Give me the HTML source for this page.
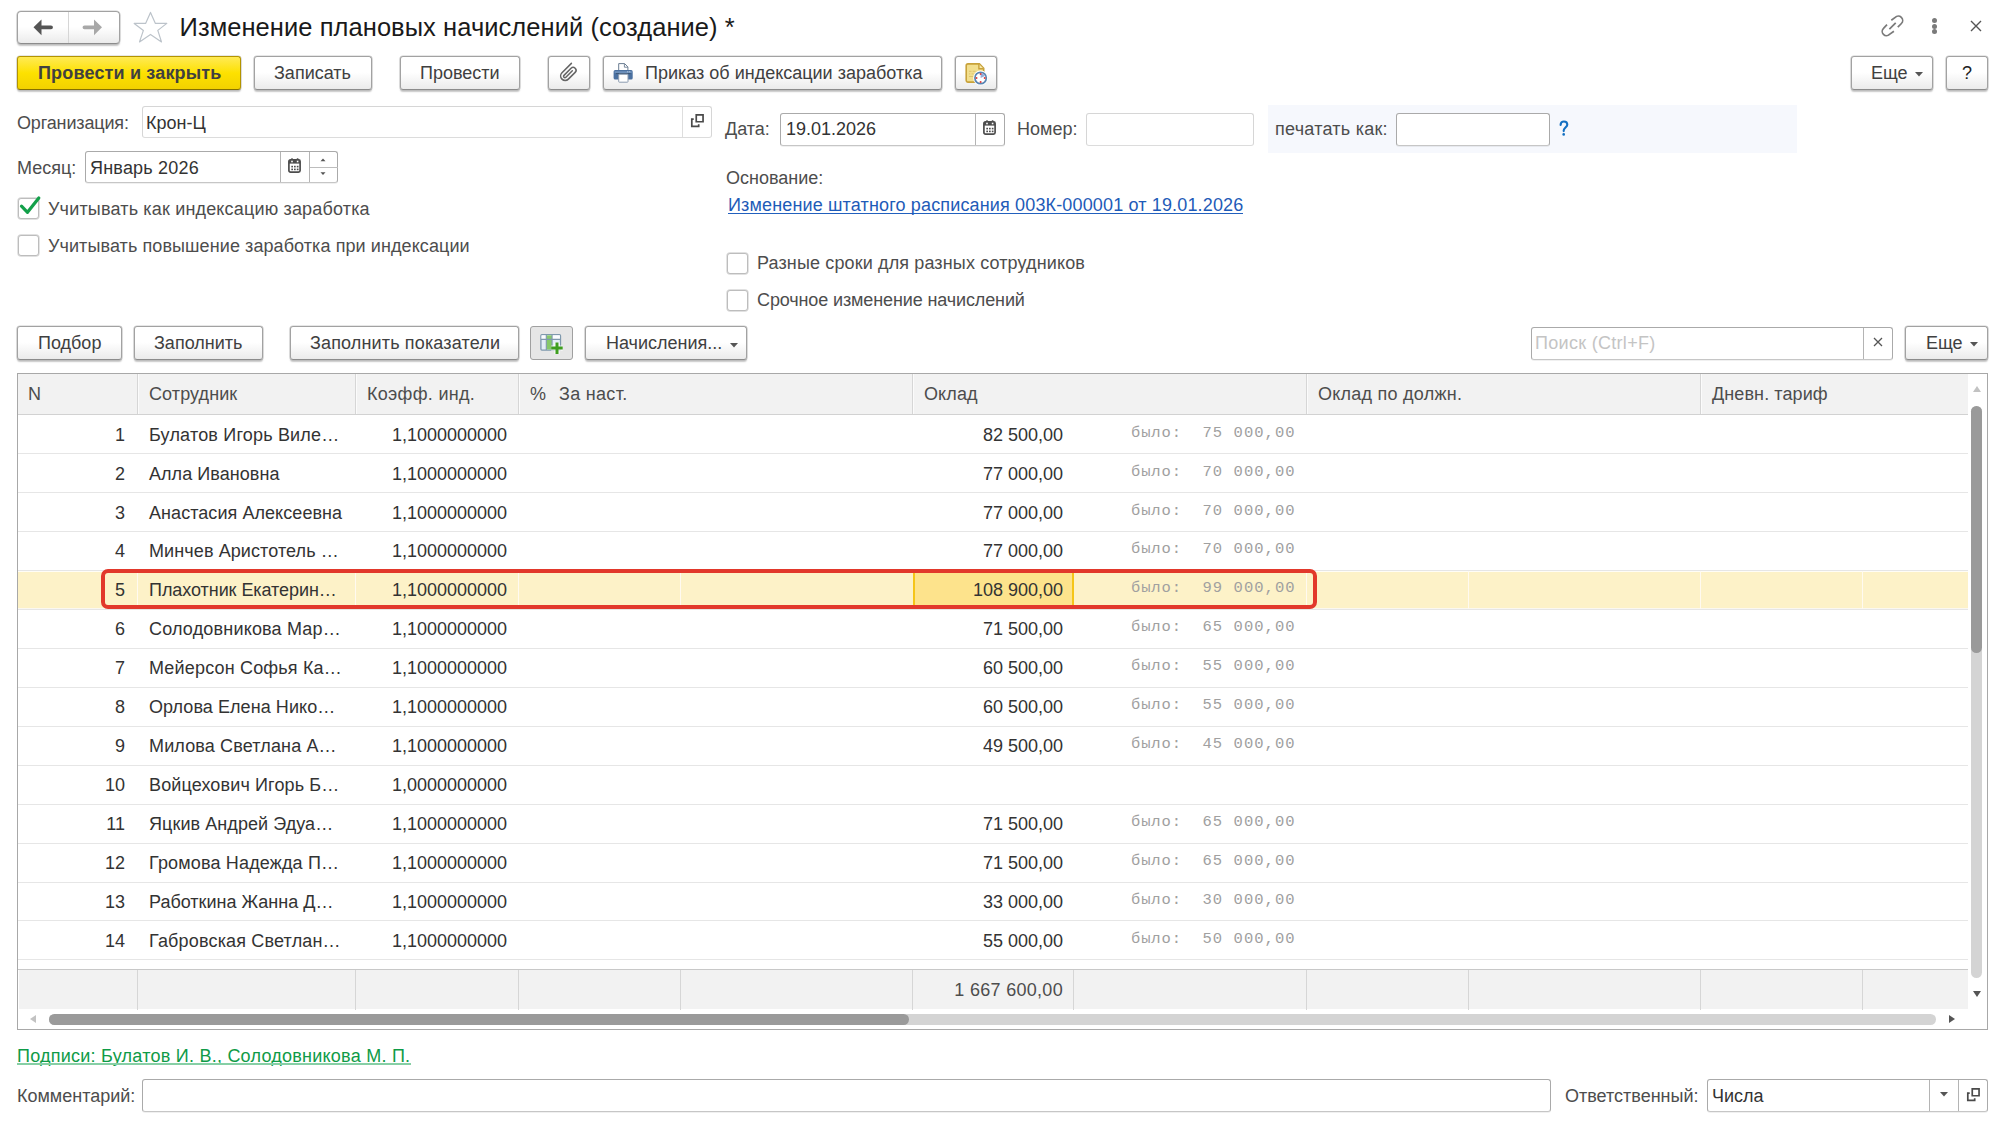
<!DOCTYPE html>
<html lang="ru"><head><meta charset="utf-8"><title>Изменение плановых начислений</title><style>
*{margin:0;padding:0;box-sizing:border-box}
html,body{width:2000px;height:1121px;overflow:hidden;background:#fff}
body{position:relative;font-family:"Liberation Sans",sans-serif;font-size:18px;color:#4d4d4d}
.a{position:absolute}
.t{position:absolute;line-height:20px;white-space:nowrap}
.btn{position:absolute;height:34px;border:1px solid #a2a2a2;border-bottom-color:#8c8c8c;border-radius:3px;
 background:linear-gradient(#ffffff 0%,#ffffff 48%,#ebebeb 100%);box-shadow:0 0 0 0.6px rgba(150,150,150,.45),0 1.5px 1.5px rgba(0,0,0,.22);
 color:#404040;line-height:20px;white-space:nowrap}
.btn .lbl{position:absolute;top:6px}
.fld{position:absolute;border:1px solid #aaaaaa;border-bottom-color:#c6c6c6;border-radius:3px;background:#fff;box-shadow:0 1px 0 rgba(0,0,0,.06)}
.fld.lt{border-color:#d6d6d6;border-bottom-color:#dcdcdc;box-shadow:none}
.vd{position:absolute;top:0;bottom:0;width:1px;background:#b4b4b4}
.cb{position:absolute;width:21px;height:21px;border:1px solid #bdbdbd;border-radius:3px;background:#fff;box-shadow:0 0 0 0.7px rgba(190,190,190,.6)}
.lnk{position:absolute;line-height:20px;white-space:nowrap;color:#1e5bb8}
.hd{position:absolute;top:374px;height:40px;background:#f2f2f2}
.row{position:absolute;left:18px;width:1950px;height:39px;border-bottom:1px solid #ebebeb}
.c{position:absolute;line-height:20px;white-space:nowrap;color:#333}
.r{text-align:right}
.was{position:absolute;font-family:"Liberation Mono",monospace;font-size:15.5px;letter-spacing:0.86px;line-height:19px;color:#a0a0a0;white-space:pre}
</style></head><body>
<div class="btn" style="left:17px;top:11px;width:103px;height:33px;border-radius:4px"></div>
<div class="a" style="left:68px;top:12px;width:1px;height:31px;background:#d6d6d6"></div>
<svg class="a" style="left:30px;top:16px" width="26" height="22" viewBox="0 0 26 22"><path d="M3.5 11.3 L11.5 3.4 V9.4 H21 A1.95 1.95 0 0 1 21 13.3 H11.5 V19.2 Z" fill="#555"/></svg>
<svg class="a" style="left:80px;top:16px" width="26" height="22" viewBox="0 0 26 22"><path d="M22 11.3 L14 3.4 V9.4 H4.5 A1.95 1.95 0 0 0 4.5 13.3 H14 V19.2 Z" fill="#a8a8a8"/></svg>
<svg class="a" style="left:130px;top:8px" width="42" height="38" viewBox="0 0 42 38"><path d="M20.5 4.4 L25.4 15.4 L36.8 15.4 L27.8 22.4 L31.5 33.9 L20.5 26.4 L9.5 33.9 L13.4 22.4 L4.2 15.4 L15.6 15.4 Z" fill="none" stroke="#bcc3ca" stroke-width="1.2" stroke-linejoin="round"/></svg>
<div class="t" style="left:179.5px;top:13px;font-size:25.5px;line-height:28px;color:#1a1a1a;letter-spacing:0.06px">Изменение плановых начислений (создание) *</div>
<svg class="a" style="left:1880px;top:14px" width="25" height="24" viewBox="0 0 25 24"><g fill="none" stroke="#7a7a7a" stroke-width="1.7"><path d="M11.3 6.3 L15.2 3.4 A4.2 4.2 0 0 1 21.4 9.5 L17.8 13.2"/><path d="M7.0 10.6 L3.5 14.3 A4.2 4.2 0 0 0 9.5 20.4 L13.9 17.2"/><path d="M9.4 15.1 L15.7 8.8"/></g></svg>
<div class="a" style="left:1932px;top:18px;width:5px;height:5px;border-radius:50%;background:#7a7a7a"></div>
<div class="a" style="left:1932px;top:23.5px;width:5px;height:5px;border-radius:50%;background:#7a7a7a"></div>
<div class="a" style="left:1932px;top:29px;width:5px;height:5px;border-radius:50%;background:#7a7a7a"></div>
<svg class="a" style="left:1970px;top:20px" width="12" height="12" viewBox="0 0 12 12"><path d="M1 1 L11 11 M11 1 L1 11" stroke="#555" stroke-width="1.4"/></svg>
<div class="btn" style="left:17px;top:56px;width:224px;border-color:#b39400;border-bottom-color:#857000;background:linear-gradient(#ffea55,#fde100 50%,#f2d200);font-weight:bold;color:#404040"><span class="lbl" style="left:20px;letter-spacing:0.17px">Провести и закрыть</span></div>
<div class="btn" style="left:254px;top:56px;width:118px"><span class="lbl" style="left:19px">Записать</span></div>
<div class="btn" style="left:400px;top:56px;width:120px"><span class="lbl" style="left:19px">Провести</span></div>
<div class="btn" style="left:548px;top:56px;width:42px"></div>
<svg class="a" style="left:555px;top:59px" width="28" height="28" viewBox="0 0 28 28"><g transform="translate(13.5 13.5) rotate(45)"><path d="M-4.4 -8.5 V4.8 A4.5 4.5 0 0 0 4.6 4.8 V-4.8 A2.9 2.9 0 0 0 -1.2 -4.8 V5.2 A1.35 1.35 0 0 0 1.5 5.2 V-3.9" fill="none" stroke="#666" stroke-width="1.55" stroke-linecap="round"/></g></svg>
<div class="btn" style="left:603px;top:56px;width:339px"><span class="lbl" style="left:41px">Приказ об индексации заработка</span></div>
<svg class="a" style="left:610px;top:59px" width="28" height="28" viewBox="0 0 28 28"><path d="M8.7 4.6 H14.6 L17.9 7.9 V12 H8.7 Z" fill="#fff" stroke="#6b7d92" stroke-width="1"/><path d="M14.4 4.8 V8.2 H17.8" fill="none" stroke="#6b7d92" stroke-width="0.9"/><rect x="3.6" y="11.1" width="19.1" height="9.4" rx="1.6" fill="#4a70a0"/><rect x="4.6" y="12.2" width="17.2" height="1.8" fill="#6d90bb"/><rect x="6" y="14" width="14.5" height="1.1" fill="#3a5677"/><rect x="17.2" y="12.3" width="1" height="1" fill="#c5d4e6"/><rect x="19.2" y="12.3" width="1" height="1" fill="#c5d4e6"/><rect x="8.7" y="15.2" width="9.3" height="8" rx="0.6" fill="#fff" stroke="#8a9aae" stroke-width="1"/></svg>
<div class="btn" style="left:955px;top:56px;width:42px"></div>
<svg class="a" style="left:962px;top:59px" width="28" height="28" viewBox="0 0 28 28"><path d="M6 4.9 H17.4 L21.7 9.3 V23.1 H6 A1.8 1.8 0 0 1 4.2 21.3 V6.7 A1.8 1.8 0 0 1 6 4.9 Z" fill="#f2df8e" stroke="#c8a23a" stroke-width="1.6"/><path d="M16.9 5 V9.7 H21.6" fill="#f6e8ad" stroke="#c8a23a" stroke-width="1.4"/><g fill="#dcc36e"><rect x="7" y="11.8" width="2.5" height="1"/><rect x="10.6" y="11.8" width="3" height="1"/><rect x="7" y="14.4" width="1.2" height="1"/><rect x="9.6" y="14.4" width="2" height="1"/><rect x="7" y="17" width="4" height="1"/></g><circle cx="18.6" cy="19" r="7.4" fill="#fff"/><circle cx="18.6" cy="19" r="5.7" fill="#fff" stroke="#5a85b2" stroke-width="1.7"/><path d="M18.6 19 V14.1 A4.9 4.9 0 0 1 23 16.9 Z" fill="#93acd8"/><g fill="#e03a3a"><circle cx="18.6" cy="14.9" r="1"/><circle cx="22.7" cy="19" r="1"/><circle cx="18.6" cy="23.1" r="1"/><circle cx="14.5" cy="19" r="1"/></g></svg>
<div class="btn" style="left:1851px;top:56px;width:82px"><span class="lbl" style="left:19px">Еще</span><svg class="a" style="left:63px;top:15px" width="8" height="5"><path d="M0 0 H8 L4 4.5 Z" fill="#555"/></svg></div>
<div class="btn" style="left:1946px;top:56px;width:42px"><span class="lbl" style="left:15px;color:#222">?</span></div>
<div class="t" style="left:17px;top:113px;letter-spacing:-0.15px">Организация:</div>
<div class="fld lt" style="left:142px;top:106px;width:570px;height:32px"><div class="vd" style="left:539px;background:#dedede"></div></div>
<div class="t" style="left:146px;top:113px;color:#333">Крон-Ц</div>
<svg class="a" style="left:690px;top:114px" width="14" height="14" viewBox="0 0 14 14"><path d="M6.25 0.95 H13.05 V7.75 H6.25 Z M3.7 5.1 H1.8 V12.4 H8.7 V10.3" fill="none" stroke="#4a4a4a" stroke-width="1.7"/></svg>
<div class="t" style="left:17px;top:158px">Месяц:</div>
<div class="fld" style="left:85px;top:151px;width:253px;height:32px"><div class="vd" style="left:194px"></div><div class="vd" style="left:223px"></div><div class="a" style="left:224px;top:15px;width:28px;height:1px;background:#bdbdbd"></div></div>
<div class="t" style="left:90px;top:158px;color:#333;letter-spacing:0.2px">Январь 2026</div>
<svg class="a" style="left:288px;top:158px" width="13" height="16" viewBox="0 0 13 16"><rect x="0.9" y="1.9" width="11.2" height="12.3" rx="1.6" fill="#fff" stroke="#4d4d4d" stroke-width="1.7"/><rect x="0.9" y="1.9" width="11.2" height="3.7" fill="#4d4d4d"/><rect x="3.1" y="0.2" width="1.8" height="2.4" rx="0.6" fill="#4d4d4d"/><rect x="8.7" y="0.2" width="1.8" height="2.4" rx="0.6" fill="#4d4d4d"/><rect x="3.2" y="2.7" width="1.6" height="1.6" fill="#fff"/><rect x="8.8" y="2.7" width="1.6" height="1.6" fill="#fff"/><g fill="#4d4d4d"><rect x="3.3" y="7.8" width="1.7" height="1.6"/><rect x="6" y="7.8" width="1.7" height="1.6"/><rect x="8.8" y="7.8" width="1.7" height="1.6"/><rect x="3.3" y="10.6" width="1.7" height="1.6"/><rect x="6" y="10.6" width="1.7" height="1.6"/><rect x="8.8" y="10.6" width="1.7" height="1.6"/></g></svg>
<svg class="a" style="left:320px;top:158px" width="6" height="4"><path d="M0.5 3.2 H5.5 L3 0.5 Z" fill="#555"/></svg>
<svg class="a" style="left:320px;top:172px" width="6" height="4"><path d="M0.5 0.3 H5.5 L3 3 Z" fill="#555"/></svg>
<div class="t" style="left:725px;top:119px">Дата:</div>
<div class="fld" style="left:780px;top:113px;width:225px;height:33px"><div class="vd" style="left:194px"></div></div>
<div class="t" style="left:786px;top:119px;color:#333">19.01.2026</div>
<svg class="a" style="left:983px;top:120px" width="13" height="16" viewBox="0 0 13 16"><rect x="0.9" y="1.9" width="11.2" height="12.3" rx="1.6" fill="#fff" stroke="#4d4d4d" stroke-width="1.7"/><rect x="0.9" y="1.9" width="11.2" height="3.7" fill="#4d4d4d"/><rect x="3.1" y="0.2" width="1.8" height="2.4" rx="0.6" fill="#4d4d4d"/><rect x="8.7" y="0.2" width="1.8" height="2.4" rx="0.6" fill="#4d4d4d"/><rect x="3.2" y="2.7" width="1.6" height="1.6" fill="#fff"/><rect x="8.8" y="2.7" width="1.6" height="1.6" fill="#fff"/><g fill="#4d4d4d"><rect x="3.3" y="7.8" width="1.7" height="1.6"/><rect x="6" y="7.8" width="1.7" height="1.6"/><rect x="8.8" y="7.8" width="1.7" height="1.6"/><rect x="3.3" y="10.6" width="1.7" height="1.6"/><rect x="6" y="10.6" width="1.7" height="1.6"/><rect x="8.8" y="10.6" width="1.7" height="1.6"/></g></svg>
<div class="t" style="left:1017px;top:119px">Номер:</div>
<div class="fld lt" style="left:1086px;top:113px;width:168px;height:33px"></div>
<div class="a" style="left:1268px;top:105px;width:529px;height:48px;background:#f6f8fd"></div>
<div class="t" style="left:1275px;top:119px;letter-spacing:0.25px">печатать как:</div>
<div class="fld" style="left:1396px;top:113px;width:154px;height:33px"></div>
<svg class="a" style="left:1550px;top:112px" width="28" height="30" viewBox="0 0 28 30"><path d="M10.6 13 C10.6 10.6 12.1 9.5 13.9 9.5 C15.8 9.5 17.3 10.8 17.3 12.7 C17.3 15 13.7 16.1 13.7 18.4 V19.1" fill="none" stroke="#1470c2" stroke-width="2.1" stroke-linecap="round"/><circle cx="13.7" cy="22.4" r="1.3" fill="#1470c2"/></svg>
<div class="t" style="left:726px;top:168px">Основание:</div>
<div class="lnk" style="left:728px;top:195px;letter-spacing:0.15px">Изменение штатного расписания 003К-000001 от 19.01.2026</div><div class="a" style="left:728px;top:213px;width:515px;height:1px;background:#2260bd"></div>
<div class="cb" style="left:18px;top:198px"></div>
<svg class="a" style="left:18px;top:194px" width="24" height="22" viewBox="0 0 24 22"><path d="M3.5 12.2 L9.5 18.3 L20.8 4" fill="none" stroke="#13a04a" stroke-width="3.2" stroke-linecap="round" stroke-linejoin="round"/></svg>
<div class="t" style="left:48px;top:199px;letter-spacing:0.17px">Учитывать как индексацию заработка</div>
<div class="cb" style="left:18px;top:235px"></div>
<div class="t" style="left:48px;top:236px;letter-spacing:0.085px">Учитывать повышение заработка при индексации</div>
<div class="cb" style="left:727px;top:253px"></div>
<div class="t" style="left:757px;top:253px;letter-spacing:0.13px">Разные сроки для разных сотрудников</div>
<div class="cb" style="left:727px;top:290px"></div>
<div class="t" style="left:757px;top:290px;letter-spacing:-0.12px">Срочное изменение начислений</div>
<div class="btn" style="left:17px;top:326px;width:105px"><span class="lbl" style="left:20px">Подбор</span></div>
<div class="btn" style="left:134px;top:326px;width:129px"><span class="lbl" style="left:19px">Заполнить</span></div>
<div class="btn" style="left:290px;top:326px;width:229px"><span class="lbl" style="left:19px;letter-spacing:0.15px">Заполнить показатели</span></div>
<div class="btn" style="left:530px;top:326px;width:43px;background:#e6e6e6;box-shadow:none;border-color:#a0a0a0"></div>
<svg class="a" style="left:536px;top:329px" width="30" height="30" viewBox="0 0 30 30"><rect x="4.9" y="5.7" width="19.6" height="15.4" rx="1" fill="#e4eef7" stroke="#7f99ad" stroke-width="1.3"/><rect x="5.5" y="6.3" width="18.4" height="4" fill="#fbfdff"/><rect x="10.4" y="6.3" width="5.6" height="14.2" fill="#86c96a"/><path d="M5 10.4 H24.4 M10.3 6 V21 M16.1 6 V21" stroke="#7f99ad" stroke-width="1.1"/><path d="M21 13.6 V24.9 M15.2 19.1 H26.7" stroke="#fff" stroke-width="5.4" stroke-opacity="0.75"/><path d="M21 13.6 V24.9 M15.2 19.1 H26.7" stroke="#3f9e1f" stroke-width="3"/></svg>
<div class="btn" style="left:585px;top:326px;width:162px"><span class="lbl" style="left:20px">Начисления...</span><svg class="a" style="left:144px;top:16px" width="8" height="5"><path d="M0 0 H8 L4 4.5 Z" fill="#555"/></svg></div>
<div class="fld" style="left:1531px;top:327px;width:362px;height:33px"><div class="vd" style="left:331px"></div></div>
<div class="t" style="left:1535px;top:333px;color:#c4c4c4;letter-spacing:0.3px">Поиск (Ctrl+F)</div>
<svg class="a" style="left:1873px;top:337px" width="10" height="10" viewBox="0 0 10 10"><path d="M1 1 L9 9 M9 1 L1 9" stroke="#555" stroke-width="1.3"/></svg>
<div class="btn" style="left:1905px;top:326px;width:83px"><span class="lbl" style="left:20px">Еще</span><svg class="a" style="left:64px;top:15px" width="8" height="5"><path d="M0 0 H8 L4 4.5 Z" fill="#555"/></svg></div>
<div class="a" style="left:17px;top:373px;width:1971px;height:657px;border:1px solid #a8a8a8;background:#fff"></div>
<div class="hd" style="left:18px;width:1950px;border-bottom:1px solid #d2d2d2;height:41px"></div>
<div class="a" style="left:137px;top:374px;width:1px;height:40px;background:#d6d6d6"></div>
<div class="a" style="left:138px;top:374px;width:1px;height:40px;background:#fbfbfb"></div>
<div class="a" style="left:355px;top:374px;width:1px;height:40px;background:#d6d6d6"></div>
<div class="a" style="left:356px;top:374px;width:1px;height:40px;background:#fbfbfb"></div>
<div class="a" style="left:518px;top:374px;width:1px;height:40px;background:#d6d6d6"></div>
<div class="a" style="left:519px;top:374px;width:1px;height:40px;background:#fbfbfb"></div>
<div class="a" style="left:912px;top:374px;width:1px;height:40px;background:#d6d6d6"></div>
<div class="a" style="left:913px;top:374px;width:1px;height:40px;background:#fbfbfb"></div>
<div class="a" style="left:1306px;top:374px;width:1px;height:40px;background:#d6d6d6"></div>
<div class="a" style="left:1307px;top:374px;width:1px;height:40px;background:#fbfbfb"></div>
<div class="a" style="left:1700px;top:374px;width:1px;height:40px;background:#d6d6d6"></div>
<div class="a" style="left:1701px;top:374px;width:1px;height:40px;background:#fbfbfb"></div>
<div class="t" style="left:28px;top:384px;color:#4d4d4d;letter-spacing:0.00px">N</div>
<div class="t" style="left:149px;top:384px;color:#4d4d4d;letter-spacing:0.10px">Сотрудник</div>
<div class="t" style="left:367px;top:384px;color:#4d4d4d;letter-spacing:0.30px">Коэфф. инд.</div>
<div class="t" style="left:530px;top:384px;color:#4d4d4d;letter-spacing:0.00px">%</div>
<div class="t" style="left:559px;top:384px;color:#4d4d4d;letter-spacing:0.30px">За наст.</div>
<div class="t" style="left:924px;top:384px;color:#4d4d4d;letter-spacing:0.10px">Оклад</div>
<div class="t" style="left:1318px;top:384px;color:#4d4d4d;letter-spacing:0.25px">Оклад по должн.</div>
<div class="t" style="left:1712px;top:384px;color:#4d4d4d;letter-spacing:0.10px">Дневн. тариф</div>
<div class="a" style="left:18px;top:453px;width:1950px;height:1px;background:#e6e6e6"></div>
<div class="c r" style="left:18px;width:107px;top:425px">1</div>
<div class="c" style="left:149px;top:425px;letter-spacing:0.19px">Булатов Игорь Виле…</div>
<div class="c r" style="left:356px;width:151px;top:425px">1,1000000000</div>
<div class="c r" style="left:913px;width:150px;top:425px">82 500,00</div>
<div class="was" style="left:1131px;top:424px">было:</div>
<div class="was" style="left:1202.5px;top:424px;letter-spacing:1.05px">75 000,00</div>
<div class="a" style="left:18px;top:492px;width:1950px;height:1px;background:#e6e6e6"></div>
<div class="c r" style="left:18px;width:107px;top:464px">2</div>
<div class="c" style="left:149px;top:464px;letter-spacing:0.05px">Алла Ивановна</div>
<div class="c r" style="left:356px;width:151px;top:464px">1,1000000000</div>
<div class="c r" style="left:913px;width:150px;top:464px">77 000,00</div>
<div class="was" style="left:1131px;top:463px">было:</div>
<div class="was" style="left:1202.5px;top:463px;letter-spacing:1.05px">70 000,00</div>
<div class="a" style="left:18px;top:531px;width:1950px;height:1px;background:#e6e6e6"></div>
<div class="c r" style="left:18px;width:107px;top:503px">3</div>
<div class="c" style="left:149px;top:503px;letter-spacing:0.06px">Анастасия Алексеевна</div>
<div class="c r" style="left:356px;width:151px;top:503px">1,1000000000</div>
<div class="c r" style="left:913px;width:150px;top:503px">77 000,00</div>
<div class="was" style="left:1131px;top:502px">было:</div>
<div class="was" style="left:1202.5px;top:502px;letter-spacing:1.05px">70 000,00</div>
<div class="a" style="left:18px;top:570px;width:1950px;height:1px;background:#e6e6e6"></div>
<div class="c r" style="left:18px;width:107px;top:541px">4</div>
<div class="c" style="left:149px;top:541px;letter-spacing:0.10px">Минчев Аристотель …</div>
<div class="c r" style="left:356px;width:151px;top:541px">1,1000000000</div>
<div class="c r" style="left:913px;width:150px;top:541px">77 000,00</div>
<div class="was" style="left:1131px;top:540px">было:</div>
<div class="was" style="left:1202.5px;top:540px;letter-spacing:1.05px">70 000,00</div>
<div class="a" style="left:18px;top:571px;width:1950px;height:38px;background:#fdf2c8"></div>
<div class="a" style="left:18px;top:571px;width:1950px;height:1px;background:#fffdf6"></div>
<div class="a" style="left:18px;top:608px;width:1950px;height:1px;background:#fbf8f0"></div>
<div class="a" style="left:18px;top:609px;width:1950px;height:1px;background:#e6e6e6"></div>
<div class="a" style="left:137px;top:571px;width:1px;height:38px;background:#fffaf0"></div>
<div class="a" style="left:355px;top:571px;width:1px;height:38px;background:#fffaf0"></div>
<div class="a" style="left:518px;top:571px;width:1px;height:38px;background:#fffaf0"></div>
<div class="a" style="left:680px;top:571px;width:1px;height:38px;background:#fffaf0"></div>
<div class="a" style="left:1306px;top:571px;width:1px;height:38px;background:#fffaf0"></div>
<div class="a" style="left:1468px;top:571px;width:1px;height:38px;background:#fffaf0"></div>
<div class="a" style="left:1700px;top:571px;width:1px;height:38px;background:#fffaf0"></div>
<div class="a" style="left:1862px;top:571px;width:1px;height:38px;background:#fffaf0"></div>
<div class="a" style="left:913px;top:571px;width:161px;height:38px;background:#fde38c;border-left:2px solid #f5c518;border-right:2px solid #f5c518"></div>
<div class="c r" style="left:18px;width:107px;top:580px">5</div>
<div class="c" style="left:149px;top:580px;letter-spacing:-0.06px">Плахотник Екатерин…</div>
<div class="c r" style="left:356px;width:151px;top:580px">1,1000000000</div>
<div class="c r" style="left:913px;width:150px;top:580px">108 900,00</div>
<div class="was" style="left:1131px;top:579px">было:</div>
<div class="was" style="left:1202.5px;top:579px;letter-spacing:1.05px">99 000,00</div>
<div class="a" style="left:18px;top:648px;width:1950px;height:1px;background:#e6e6e6"></div>
<div class="c r" style="left:18px;width:107px;top:619px">6</div>
<div class="c" style="left:149px;top:619px;letter-spacing:0.18px">Солодовникова Мар…</div>
<div class="c r" style="left:356px;width:151px;top:619px">1,1000000000</div>
<div class="c r" style="left:913px;width:150px;top:619px">71 500,00</div>
<div class="was" style="left:1131px;top:618px">было:</div>
<div class="was" style="left:1202.5px;top:618px;letter-spacing:1.05px">65 000,00</div>
<div class="a" style="left:18px;top:687px;width:1950px;height:1px;background:#e6e6e6"></div>
<div class="c r" style="left:18px;width:107px;top:658px">7</div>
<div class="c" style="left:149px;top:658px;letter-spacing:0.17px">Мейерсон Софья Ка…</div>
<div class="c r" style="left:356px;width:151px;top:658px">1,1000000000</div>
<div class="c r" style="left:913px;width:150px;top:658px">60 500,00</div>
<div class="was" style="left:1131px;top:657px">было:</div>
<div class="was" style="left:1202.5px;top:657px;letter-spacing:1.05px">55 000,00</div>
<div class="a" style="left:18px;top:726px;width:1950px;height:1px;background:#e6e6e6"></div>
<div class="c r" style="left:18px;width:107px;top:697px">8</div>
<div class="c" style="left:149px;top:697px;letter-spacing:0.07px">Орлова Елена Нико…</div>
<div class="c r" style="left:356px;width:151px;top:697px">1,1000000000</div>
<div class="c r" style="left:913px;width:150px;top:697px">60 500,00</div>
<div class="was" style="left:1131px;top:696px">было:</div>
<div class="was" style="left:1202.5px;top:696px;letter-spacing:1.05px">55 000,00</div>
<div class="a" style="left:18px;top:765px;width:1950px;height:1px;background:#e6e6e6"></div>
<div class="c r" style="left:18px;width:107px;top:736px">9</div>
<div class="c" style="left:149px;top:736px;letter-spacing:0.14px">Милова Светлана А…</div>
<div class="c r" style="left:356px;width:151px;top:736px">1,1000000000</div>
<div class="c r" style="left:913px;width:150px;top:736px">49 500,00</div>
<div class="was" style="left:1131px;top:735px">было:</div>
<div class="was" style="left:1202.5px;top:735px;letter-spacing:1.05px">45 000,00</div>
<div class="a" style="left:18px;top:804px;width:1950px;height:1px;background:#e6e6e6"></div>
<div class="c r" style="left:18px;width:107px;top:775px">10</div>
<div class="c" style="left:149px;top:775px;letter-spacing:0.13px">Войцехович Игорь Б…</div>
<div class="c r" style="left:356px;width:151px;top:775px">1,0000000000</div>
<div class="a" style="left:18px;top:843px;width:1950px;height:1px;background:#e6e6e6"></div>
<div class="c r" style="left:18px;width:107px;top:814px">11</div>
<div class="c" style="left:149px;top:814px;letter-spacing:0.07px">Яцкив Андрей Эдуа…</div>
<div class="c r" style="left:356px;width:151px;top:814px">1,1000000000</div>
<div class="c r" style="left:913px;width:150px;top:814px">71 500,00</div>
<div class="was" style="left:1131px;top:813px">было:</div>
<div class="was" style="left:1202.5px;top:813px;letter-spacing:1.05px">65 000,00</div>
<div class="a" style="left:18px;top:882px;width:1950px;height:1px;background:#e6e6e6"></div>
<div class="c r" style="left:18px;width:107px;top:853px">12</div>
<div class="c" style="left:149px;top:853px;letter-spacing:0.16px">Громова Надежда П…</div>
<div class="c r" style="left:356px;width:151px;top:853px">1,1000000000</div>
<div class="c r" style="left:913px;width:150px;top:853px">71 500,00</div>
<div class="was" style="left:1131px;top:852px">было:</div>
<div class="was" style="left:1202.5px;top:852px;letter-spacing:1.05px">65 000,00</div>
<div class="a" style="left:18px;top:920px;width:1950px;height:1px;background:#e6e6e6"></div>
<div class="c r" style="left:18px;width:107px;top:892px">13</div>
<div class="c" style="left:149px;top:892px;letter-spacing:0.00px">Работкина Жанна Д…</div>
<div class="c r" style="left:356px;width:151px;top:892px">1,1000000000</div>
<div class="c r" style="left:913px;width:150px;top:892px">33 000,00</div>
<div class="was" style="left:1131px;top:891px">было:</div>
<div class="was" style="left:1202.5px;top:891px;letter-spacing:1.05px">30 000,00</div>
<div class="a" style="left:18px;top:959px;width:1950px;height:1px;background:#e6e6e6"></div>
<div class="c r" style="left:18px;width:107px;top:931px">14</div>
<div class="c" style="left:149px;top:931px;letter-spacing:0.17px">Габровская Светлан…</div>
<div class="c r" style="left:356px;width:151px;top:931px">1,1000000000</div>
<div class="c r" style="left:913px;width:150px;top:931px">55 000,00</div>
<div class="was" style="left:1131px;top:930px">было:</div>
<div class="was" style="left:1202.5px;top:930px;letter-spacing:1.05px">50 000,00</div>
<div class="a" style="left:18px;top:969px;width:1950px;height:1px;background:#c8c8c8"></div>
<div class="a" style="left:19px;top:970px;width:1949px;height:39px;background:#f2f2f2"></div>
<div class="a" style="left:137px;top:970px;width:1px;height:40px;background:#d6d6d6"></div>
<div class="a" style="left:355px;top:970px;width:1px;height:40px;background:#d6d6d6"></div>
<div class="a" style="left:518px;top:970px;width:1px;height:40px;background:#d6d6d6"></div>
<div class="a" style="left:680px;top:970px;width:1px;height:40px;background:#d6d6d6"></div>
<div class="a" style="left:912px;top:970px;width:1px;height:40px;background:#d6d6d6"></div>
<div class="a" style="left:1073px;top:970px;width:1px;height:40px;background:#d6d6d6"></div>
<div class="a" style="left:1306px;top:970px;width:1px;height:40px;background:#d6d6d6"></div>
<div class="a" style="left:1468px;top:970px;width:1px;height:40px;background:#d6d6d6"></div>
<div class="a" style="left:1700px;top:970px;width:1px;height:40px;background:#d6d6d6"></div>
<div class="a" style="left:1862px;top:970px;width:1px;height:40px;background:#d6d6d6"></div>
<div class="c r" style="left:913px;width:150px;top:980px;color:#4d4d4d;letter-spacing:0.3px">1 667 600,00</div>
<div class="a" style="left:1971px;top:406px;width:11px;height:572px;border-radius:6px;background:#d4d4d4"></div>
<div class="a" style="left:1971px;top:406px;width:11px;height:247px;border-radius:6px;background:#9a9a9a"></div>
<svg class="a" style="left:1973px;top:386px" width="8" height="6"><path d="M0 6 H8 L4 0 Z" fill="#c2c2c2"/></svg>
<svg class="a" style="left:1973px;top:991px" width="8" height="6"><path d="M0 0 H8 L4 6 Z" fill="#555"/></svg>
<div class="a" style="left:49px;top:1014px;width:1887px;height:11px;border-radius:6px;background:#d4d4d4"></div>
<div class="a" style="left:49px;top:1014px;width:860px;height:11px;border-radius:6px;background:#9a9a9a"></div>
<svg class="a" style="left:30px;top:1015px" width="6" height="8"><path d="M6 0 V8 L0 4 Z" fill="#c2c2c2"/></svg>
<svg class="a" style="left:1949px;top:1015px" width="6" height="8"><path d="M0 0 V8 L6 4 Z" fill="#555"/></svg>
<div class="a" style="left:101px;top:569px;width:1216px;height:39.5px;border:4px solid #e2382b;border-radius:7px"></div>
<div class="t" style="left:17px;top:1046px;color:#0f9b47;letter-spacing:0.24px">Подписи: Булатов И. В., Солодовникова М. П.</div>
<div class="a" style="left:17px;top:1063px;width:394px;height:2px;background:#86cfa5"></div>
<div class="t" style="left:17px;top:1086px">Комментарий:</div>
<div class="fld" style="left:142px;top:1079px;width:1409px;height:33px"></div>
<div class="t" style="left:1565px;top:1086px">Ответственный:</div>
<div class="fld" style="left:1707px;top:1079px;width:281px;height:33px"><div class="vd" style="left:221px"></div><div class="vd" style="left:250px"></div></div>
<div class="t" style="left:1712px;top:1086px;color:#333">Числа</div>
<svg class="a" style="left:1940px;top:1092px" width="8" height="5"><path d="M0 0 H8 L4 4.5 Z" fill="#555"/></svg>
<svg class="a" style="left:1966px;top:1088px" width="14" height="14" viewBox="0 0 14 14"><path d="M6.25 0.95 H13.05 V7.75 H6.25 Z M3.7 5.1 H1.8 V12.4 H8.7 V10.3" fill="none" stroke="#4a4a4a" stroke-width="1.7"/></svg>
</body></html>
